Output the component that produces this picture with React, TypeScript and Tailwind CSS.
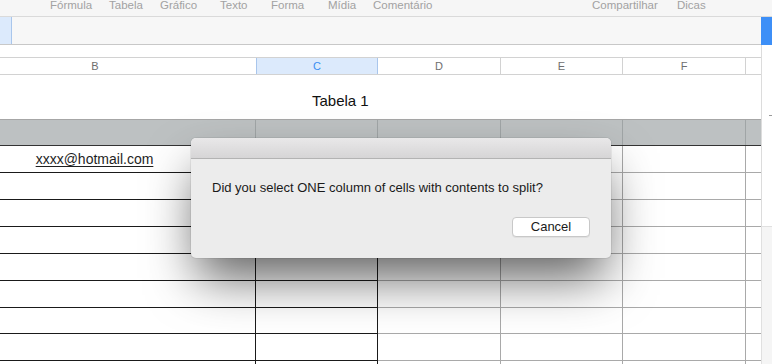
const menu = [
  { label: 'Fórmula', w: 59 },
  { label: 'Tabela', w: 51 },
  { label: 'Gráfico', w: 60 },
  { label: 'Texto', w: 51 },
  { label: 'Forma', w: 57 },
  { label: 'Mídia', w: 45 },
  { label: 'Comentário', w: 219 },
  { label: 'Compartilhar', w: 85 },
  { label: 'Dicas', w: 40 },
];

const rowHeights = [27, 27, 27, 27, 27, 26, 27, 27, 27];

function TopBar() {
  return (
    <div className="flex h-[17px] shrink-0 border-b border-[#dadada] bg-[#f6f6f6] pl-[50px] overflow-hidden">
      {menu.map((m) => (
        <div key={m.label} style={{ width: m.w }} className="shrink-0 -mt-[1px] text-[11.5px] leading-[12px] text-[#a2a2a2]">
          {m.label}
        </div>
      ))}
    </div>
  );
}

function ColumnHeaders() {
  return (
    <div className="flex h-[18px] shrink-0 border-y border-[#d2d2d2] text-[11px] leading-[16px] text-[#6e6e6e] overflow-hidden">
      <div className="-ml-[66px] w-[322px] shrink-0 text-center">B</div>
      <div className="w-[122px] shrink-0 border-x border-[#a9c6ec] bg-[#dceafc] text-center text-[#3b8ef2]">C</div>
      <div className="w-[123px] shrink-0 border-r border-[#d2d2d2] text-center">D</div>
      <div className="w-[122px] shrink-0 border-r border-[#d2d2d2] text-center">E</div>
      <div className="w-[123px] shrink-0 border-r border-[#d2d2d2] text-center">F</div>
      <div className="flex-1" />
    </div>
  );
}

function HeaderRow() {
  return (
    <div className="flex h-[27px] shrink-0 border-t border-[#a6a6a6] border-b border-b-[#333333] bg-[#bdc1c2] overflow-hidden">
      <div className="w-[256px] shrink-0 border-r border-[#a0a5a6]" />
      <div className="w-[122px] shrink-0 border-r border-[#a0a5a6]" />
      <div className="w-[123px] shrink-0 border-r border-[#a0a5a6]" />
      <div className="w-[122px] shrink-0 border-r border-[#a0a5a6]" />
      <div className="w-[123px] shrink-0 border-r border-[#a0a5a6]" />
      <div className="flex-1" />
    </div>
  );
}

function BodyRow({ h, email }: { h: number; email?: string }) {
  return (
    <div style={{ height: h }} className="flex shrink-0 overflow-hidden">
      <div className="-ml-[66px] flex w-[322px] shrink-0 items-center justify-center border-b border-r border-[#1a1a1a] text-[14px] text-[#1f1f1f]">
        {email && <span className="underline underline-offset-2">{email}</span>}
      </div>
      <div className="w-[122px] shrink-0 border-b border-r border-[#1a1a1a]" />
      <div className="w-[123px] shrink-0 border-b border-r border-[#a9a9a9]" />
      <div className="w-[122px] shrink-0 border-b border-r border-[#a9a9a9]" />
      <div className="w-[123px] shrink-0 border-b border-r border-[#a9a9a9]" />
      <div className="flex-1 border-b border-[#a9a9a9]" />
    </div>
  );
}

function Dialog() {
  return (
    <div className="absolute left-[191px] top-[138px] w-[420px] h-[120px] rounded-[5px] bg-[#ececec] shadow-[0_26px_50px_-6px_rgba(0,0,0,0.62),0_0_0_1px_rgba(0,0,0,0.06)] flex flex-col overflow-hidden">
      <div className="h-[21px] shrink-0 border-b border-[#b3b3b3] bg-gradient-to-b from-[#e9e8e9] to-[#d6d5d6]" />
      <div className="flex flex-1 flex-col px-[21px] pt-[21px]">
        <p className="text-[13px] leading-[16px] text-[#1a1a1a]">
          Did you select ONE column of cells with contents to split?
        </p>
        <div className="mt-[21px] flex justify-end">
          <button className="h-[20px] w-[78px] rounded-[4px] border border-[#c8c8c8] bg-white text-[13px] leading-[18px] text-[#1a1a1a] shadow-[0_1px_0_rgba(0,0,0,0.05)]">
            Cancel
          </button>
        </div>
      </div>
    </div>
  );
}

export default function App() {
  return (
    <div className="relative flex h-[364px] w-[772px] flex-col overflow-hidden bg-white font-['Liberation_Sans',Arial,sans-serif]">
      <TopBar />
      <div className="flex min-h-0 flex-1">
        <div className="flex w-[761px] shrink-0 flex-col overflow-hidden">
          <div className="flex h-[28px] shrink-0 border-b border-[#c8c8c8] bg-[#f7f7f7]">
            <div className="w-[12px] border-r border-[#a9c6ec] bg-[#dceafc]" />
          </div>
          <div className="h-[12px] shrink-0" />
          <ColumnHeaders />
          <div className="flex h-[44px] shrink-0 items-center pl-[312px] pt-[8px] text-[15px] text-[#111111]">
            Tabela 1
          </div>
          <HeaderRow />
          <BodyRow h={27} email="xxxx@hotmail.com" />
          {rowHeights.map((h, i) => (
            <BodyRow key={i} h={h} />
          ))}
        </div>
        <div className="flex w-[11px] shrink-0 flex-col">
          <div className="h-[28px] shrink-0 bg-[#3d8ff7]" />
          <div className="h-[181px] shrink-0 border-l border-[#dcdcdc] pt-[70px] pl-[7px]">
            <div className="h-[1px] w-[3px] bg-[#9a9a9a]" />
          </div>
          <div className="flex-1 border-l border-t border-[#e0e0e0] bg-[#f5f5f5]" />
        </div>
      </div>
      <Dialog />
    </div>
  );
}
